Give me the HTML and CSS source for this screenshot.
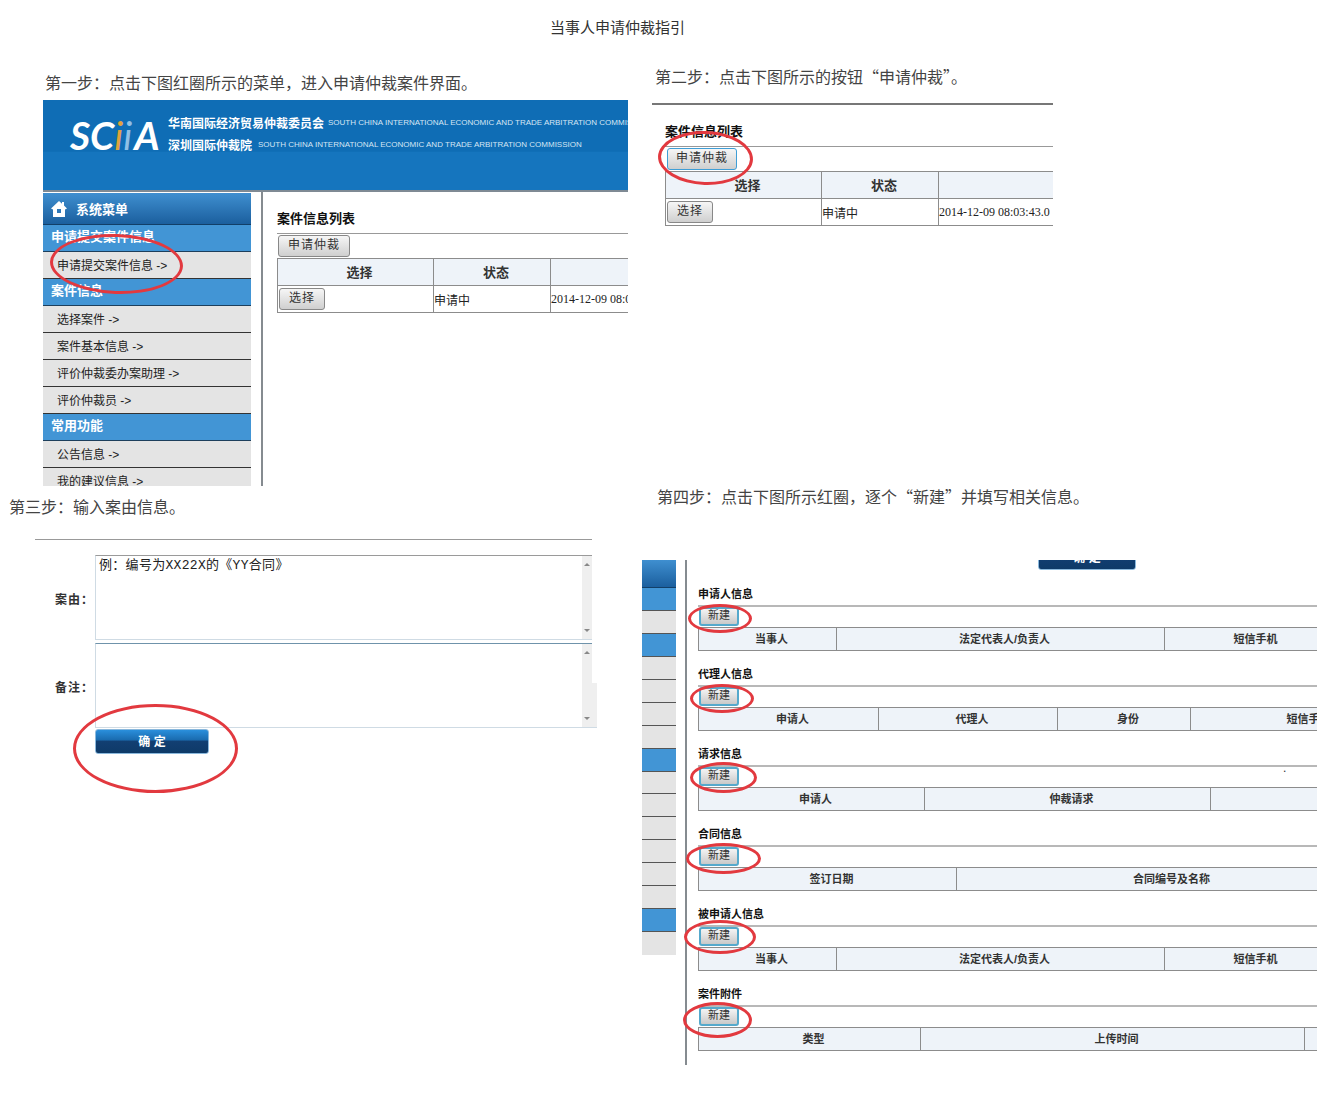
FILE: index.html
```html
<!DOCTYPE html>
<html lang="zh-CN">
<head>
    <meta charset="UTF-8">
    <title>当事人申请仲裁指引</title>
    <link rel="stylesheet" href="styles.css">
</head>
<body>
    <h1 class="page-title">当事人申请仲裁指引</h1>

    <div class="guide">
        <!-- step 1 -->
        <section class="step step-one">
            <p class="step-text">第一步：点击下图红圈所示的菜单，进入申请仲裁案件界面。</p>
            <div class="shot shot-one">
                <header class="site-head">
                    <div class="logo"><span>SC</span><span class="logo-i1">i</span><span class="logo-i2">i</span><span>A</span></div>
                    <div class="site-names">
                        <div class="site-name"><b>华南国际经济贸易仲裁委员会</b><span>SOUTH CHINA INTERNATIONAL ECONOMIC AND TRADE ARBITRATION COMMISSION</span></div>
                        <div class="site-name"><b>深圳国际仲裁院</b><span>SOUTH CHINA INTERNATIONAL ECONOMIC AND TRADE ARBITRATION COMMISSION</span></div>
                    </div>
                </header>
                <div class="app-body">
                    <nav class="side-menu">
                        <div class="menu-top">
                            <svg class="home-icon" viewBox="0 0 18 18" width="18" height="18"><path fill="#fff" d="M9 1 L1 8.5 L3 9.5 L3 17 L15 17 L15 9.5 L17 8.5 L14 5.6 L14 2 L12 2 L12 3.8 Z"/><rect x="7" y="9" width="4" height="4" fill="#2f78b8"/></svg>
                            系统菜单
                        </div>
                        <div class="menu-group">申请提交案件信息</div>
                        <div class="menu-item">申请提交案件信息 -&gt;</div>
                        <div class="menu-group">案件信息</div>
                        <div class="menu-item">选择案件 -&gt;</div>
                        <div class="menu-item">案件基本信息 -&gt;</div>
                        <div class="menu-item">评价仲裁委办案助理 -&gt;</div>
                        <div class="menu-item">评价仲裁员 -&gt;</div>
                        <div class="menu-group">常用功能</div>
                        <div class="menu-item">公告信息 -&gt;</div>
                        <div class="menu-item">我的建议信息 -&gt;</div>
                    </nav>
                    <div class="case-list case-list-one">
                        <h3 class="list-title">案件信息列表</h3>
                        <div class="list-tools"><button class="btn-grey btn-apply">申请仲裁</button></div>
                        <table class="data-table cases">
                            <tr><th>选择</th><th>状态</th><th></th></tr>
                            <tr><td><button class="btn-grey btn-pick">选择</button></td><td>申请中</td><td class="date">2014-12-09 08:03:43.0</td></tr>
                        </table>
                    </div>
                </div>
                <div class="ring ring-menu"></div>
            </div>
        </section>

        <!-- step 2 -->
        <section class="step step-two">
            <p class="step-text">第二步：点击下图所示的按钮“申请仲裁”。</p>
            <div class="shot shot-two">
                <div class="case-list">
                    <h3 class="list-title">案件信息列表</h3>
                    <div class="list-tools"><button class="btn-grey btn-apply is-focus">申请仲裁</button></div>
                    <table class="data-table cases">
                        <tr><th>选择</th><th>状态</th><th></th></tr>
                        <tr><td><button class="btn-grey btn-pick">选择</button></td><td>申请中</td><td class="date">2014-12-09 08:03:43.0</td></tr>
                    </table>
                </div>
                <div class="ring ring-apply"></div>
            </div>
        </section>

        <!-- step 3 -->
        <section class="step step-three">
            <p class="step-text">第三步：输入案由信息。</p>
            <div class="shot shot-three">
                <div class="form-row">
                    <label class="form-label">案由：</label>
                    <div class="fake-area">例：编号为XX22X的《YY合同》<div class="fake-bar"><i class="arrow-up"></i><i class="arrow-down"></i></div></div>
                </div>
                <div class="form-row">
                    <label class="form-label">备注：</label>
                    <div class="fake-area fake-area-active"><div class="fake-bar"><i class="arrow-up"></i><i class="arrow-down"></i></div><div class="bar-tail"></div></div>
                </div>
                <button class="btn-confirm">确 定</button>
                <div class="ring ring-confirm"></div>
            </div>
        </section>

        <!-- step 4 -->
        <section class="step step-four">
            <p class="step-text">第四步：点击下图所示红圈，逐个“新建”并填写相关信息。</p>
            <div class="shot shot-four">
                <div class="strip">
                    <div class="strip-top"></div>
                    <div class="strip-blue"></div><div class="strip-grey"></div>
                    <div class="strip-blue"></div><div class="strip-grey"></div><div class="strip-grey"></div><div class="strip-grey"></div><div class="strip-grey"></div>
                    <div class="strip-blue"></div><div class="strip-grey"></div><div class="strip-grey"></div><div class="strip-grey"></div><div class="strip-grey"></div><div class="strip-grey"></div><div class="strip-grey"></div>
                    <div class="strip-blue"></div><div class="strip-grey"></div>
                </div>
                <div class="forms">
                    <div class="cut-confirm"><button class="btn-confirm">确 定</button></div>

                    <div class="info-block">
                        <h4 class="info-title">申请人信息</h4>
                        <div class="info-tools"><button class="btn-new">新建</button></div>
                        <table class="data-table info party"><tr><th>当事人</th><th>法定代表人/负责人</th><th>短信手机</th></tr></table>
                    </div>
                    <div class="info-block">
                        <h4 class="info-title">代理人信息</h4>
                        <div class="info-tools"><button class="btn-new">新建</button></div>
                        <table class="data-table info agent"><tr><th>申请人</th><th>代理人</th><th>身份</th><th>短信手机</th></tr></table>
                    </div>
                    <div class="info-block">
                        <h4 class="info-title">请求信息</h4>
                        <div class="info-tools"><button class="btn-new">新建</button><span class="stray-dot">.</span></div>
                        <table class="data-table info claim"><tr><th>申请人</th><th>仲裁请求</th><th></th></tr></table>
                    </div>
                    <div class="info-block">
                        <h4 class="info-title">合同信息</h4>
                        <div class="info-tools"><button class="btn-new">新建</button></div>
                        <table class="data-table info contract"><tr><th>签订日期</th><th>合同编号及名称</th></tr></table>
                    </div>
                    <div class="info-block">
                        <h4 class="info-title">被申请人信息</h4>
                        <div class="info-tools"><button class="btn-new">新建</button></div>
                        <table class="data-table info party"><tr><th>当事人</th><th>法定代表人/负责人</th><th>短信手机</th></tr></table>
                    </div>
                    <div class="info-block">
                        <h4 class="info-title">案件附件</h4>
                        <div class="info-tools"><button class="btn-new">新建</button></div>
                        <table class="data-table info attach"><tr><th>类型</th><th>上传时间</th><th></th></tr></table>
                    </div>
                </div>
                <div class="ring ring-new1"></div>
                <div class="ring ring-new2"></div>
                <div class="ring ring-new3"></div>
                <div class="ring ring-new4"></div>
                <div class="ring ring-new5"></div>
                <div class="ring ring-new6"></div>
            </div>
        </section>
    </div>
</body>
</html>
```

FILE: styles.css
```css
* {
    box-sizing: border-box;
}

body {
    margin: 0;
    height: 1102px;
    background-color: #ffffff;
    color: #333333;
    font-family: "Liberation Sans", "Noto Sans CJK SC", sans-serif;
    overflow: hidden;
}

.page-title {
    margin: 0;
    height: 60px;
    padding-right: 102px;
    font-size: 15px;
    font-weight: normal;
    line-height: 56px;
    text-align: center;
}

.guide {
    display: grid;
    grid-template-columns: 642px 695px;
    grid-template-rows: 426px auto;
}

.step-text {
    margin: 0;
    height: 22px;
    font-family: "Noto Sans CJK SC", sans-serif;
    font-size: 16px;
    line-height: 21px;
    color: #444444;
    white-space: nowrap;
}

.shot {
    position: relative;
}

/* red hand drawn rings */
.ring {
    position: absolute;
    border: 3px solid #e2393f;
    border-radius: 50%;
    pointer-events: none;
}

/* step 1 */
.step-one {
    padding: 12px 0 0 43px;
}

.step-one .step-text {
    margin-left: 2px;
    margin-bottom: 6px;
}

.shot-one {
    width: 585px;
    height: 386px;
    overflow: hidden;
}

.site-head {
    display: flex;
    height: 92px;
    padding: 13px 0 0 27px;
    background: linear-gradient(#0f6db5 0, #0f6db5 57%, #1575be 58%, #1575be 100%);
    border-bottom: 2px solid #7f8a94;
    color: #ffffff;
    white-space: nowrap;
}

.logo {
    flex-shrink: 0;
    width: 98px;
    font-family: Lato, "Liberation Sans", sans-serif;
    font-size: 39px;
    font-style: italic;
    font-weight: bold;
    line-height: 44px;
}

.logo-i1 {
    color: #e0a33c;
    font-weight: normal;
}

.logo-i2 {
    color: #8fc0e6;
    font-weight: normal;
    margin-right: 2px;
}

.site-names {
    display: flex;
    flex-direction: column;
    gap: 4px;
}

.site-name {
    display: flex;
    align-items: center;
    height: 18px;
}

.site-name b {
    font-size: 12px;
    font-family: "Noto Sans CJK SC", sans-serif;
}

.site-name span {
    margin-left: 4px;
    font-size: 8px;
    color: #d5e6f4;
}

.site-name:last-child span {
    margin-left: 6px;
}

.app-body {
    display: flex;
    height: 294px;
}

.side-menu {
    width: 208px;
    padding-top: 1px;
    font-size: 12px;
    flex-shrink: 0;
}

.menu-top {
    display: flex;
    align-items: center;
    gap: 8px;
    height: 32px;
    padding-left: 7px;
    background: linear-gradient(#3f8fd0, #1b5f9e);
    border-bottom: 1px solid #123f68;
    color: #ffffff;
    font-size: 13px;
    font-weight: bold;
}

.menu-group {
    height: 27px;
    padding-left: 8px;
    background-color: #4295d5;
    border-bottom: 1px solid #1d3f5c;
    color: #ffffff;
    font-size: 13px;
    font-weight: bold;
    line-height: 24px;
}

.menu-item {
    height: 27px;
    padding-left: 14px;
    background-color: #e4e4e4;
    border-bottom: 1px solid #333333;
    color: #222222;
    line-height: 28px;
}

.case-list-one {
    flex: 1;
    min-width: 0;
    margin-left: 10px;
    border-left: 2px solid #858b90;
    padding-left: 14px;
}

.case-list {
    padding-top: 18px;
    overflow: hidden;
}

.list-title {
    margin: 0 0 5px;
    height: 18px;
    font-size: 13px;
    line-height: 18px;
    color: #111111;
}

.list-tools {
    height: 25px;
    padding: 1px 0 0 1px;
    border-top: 1px solid #999999;
}

.btn-grey {
    display: block;
    padding: 0 0 2px;
    border: 1px solid #888888;
    border-radius: 3px;
    background: linear-gradient(#f6f6f6, #cfcfcf);
    color: #333333;
    font-family: inherit;
    font-size: 12px;
    line-height: 14px;
    letter-spacing: 1px;
}

.btn-apply {
    width: 72px;
    height: 22px;
}

.btn-pick {
    width: 46px;
    height: 22px;
    margin-left: 1px;
}

.is-focus {
    width: 70px;
    border-color: #3f9ed6;
    margin-left: 1px;
}

.data-table {
    table-layout: fixed;
    border-collapse: collapse;
    white-space: nowrap;
}

.data-table th {
    height: 27px;
    padding: 0;
    background-color: #eef3f9;
    border: 1px solid #8c8c8c;
    font-size: 13px;
    color: #333333;
}

.data-table td {
    height: 27px;
    padding: 0;
    overflow: hidden;
    border: 1px solid #8c8c8c;
    font-size: 12px;
    color: #222222;
}

.cases {
    width: 396px;
    border-right: 0;
}

.cases th {
    padding: 0 0 2px 8px;
}

.cases th:nth-child(1) {
    width: 156px;
}

.cases th:nth-child(2) {
    width: 117px;
}

.date {
    font-family: "Liberation Serif", serif;
}

.ring-menu {
    left: 7px;
    top: 134px;
    width: 133px;
    height: 60px;
    transform: rotate(2deg);
}

/* step 2 */
.step-two {
    padding-top: 6px;
}

.step-two .step-text {
    margin: 0 0 15px 13px;
}

.shot-two {
    width: 401px;
    margin-left: 10px;
    border-top: 2px solid #777777;
}

.shot-two .case-list {
    padding: 18px 0 0 13px;
}

.ring-apply {
    left: 6px;
    top: 26px;
    width: 95px;
    height: 54px;
    transform: rotate(2deg);
}

/* step 3 */
.step-three {
    padding-top: 10px;
}

.step-three .step-text {
    margin: 0 0 21px 9px;
}

.shot-three {
    width: 557px;
    margin-left: 35px;
    padding-top: 15px;
    border-top: 1px solid #999999;
}

.form-row {
    display: flex;
    align-items: center;
    gap: 1px;
    height: 85px;
    margin-bottom: 3px;
}

.form-label {
    width: 59px;
    padding-top: 1px;
    font-size: 12px;
    font-weight: bold;
    letter-spacing: 1px;
    text-align: right;
}

.fake-area {
    position: relative;
    flex: 1;
    height: 85px;
    padding-left: 3px;
    border: 1px solid #cfdbe4;
    border-top-color: #9a9a9a;
    border-right: 0;
    font-family: "Liberation Mono", "Noto Sans CJK SC", monospace;
    font-size: 13px;
    letter-spacing: 0.3px;
    line-height: 20px;
    color: #222222;
}

.fake-area-active {
    border-top-color: #6f93ab;
}

.fake-bar {
    position: absolute;
    top: 0;
    right: 0;
    bottom: 0;
    width: 10px;
    background-color: #efefef;
}

.arrow-up,
.arrow-down {
    position: absolute;
    left: 2px;
    border-left: 3px solid transparent;
    border-right: 3px solid transparent;
}

.arrow-up {
    top: 7px;
    border-bottom: 3px solid #888888;
}

.arrow-down {
    bottom: 7px;
    border-top: 3px solid #888888;
}

.bar-tail {
    position: absolute;
    left: 100%;
    bottom: -1px;
    width: 5px;
    height: 45px;
    background-color: #efefef;
    border-bottom: 1px solid #cfdbe4;
}

.btn-confirm {
    display: block;
    width: 114px;
    height: 25px;
    margin: -2px 0 0 60px;
    padding: 0 0 2px;
    border: 1px solid #8ab8dc;
    border-radius: 3px;
    background: linear-gradient(#2a8fdc 0, #1a6cb0 42%, #123f72 50%, #0e3a68 100%);
    color: #ffffff;
    font-family: inherit;
    font-size: 12px;
    font-weight: bold;
}

.ring-confirm {
    left: 38px;
    top: 164px;
    width: 165px;
    height: 89px;
}

/* step 4 */
.step-four .step-text {
    margin: 0 0 52px 15px;
}

.shot-four {
    display: flex;
    align-items: flex-start;
    width: 675px;
    height: 505px;
    overflow: hidden;
}

.strip {
    width: 34px;
    flex-shrink: 0;
}

.strip-top {
    height: 28px;
    background: linear-gradient(#3f8fd0, #1b5f9e);
    border-bottom: 1px solid #123f68;
}

.strip-blue,
.strip-grey {
    height: 22.94px;
    border-bottom: 1px solid #555555;
}

.strip-blue {
    background-color: #4295d5;
}

.strip-grey {
    background-color: #e4e4e4;
}

.strip > :last-child {
    border-bottom: 0;
}

.forms {
    flex: 1;
    min-width: 0;
    height: 505px;
    margin-left: 9px;
    padding-left: 11px;
    border-left: 2px solid #858b90;
    overflow: hidden;
}

.cut-confirm {
    height: 10px;
    margin-bottom: 16px;
    overflow: hidden;
}

.cut-confirm .btn-confirm {
    width: 98px;
    margin: -15px 0 0 340px;
}

.info-block {
    height: 64px;
    margin-bottom: 16px;
}

.info-title {
    margin: 0 0 3px;
    height: 16px;
    font-size: 11px;
    line-height: 16px;
    color: #111111;
}

.info-tools {
    position: relative;
    height: 22px;
    border-top: 2px solid #b8b8b8;
    padding-left: 1px;
}

.stray-dot {
    position: absolute;
    left: 585px;
    top: -6px;
    font-size: 12px;
    color: #333333;
}

.btn-new {
    display: block;
    width: 40px;
    height: 19px;
    padding: 0 0 3px;
    border: 2px solid #55a9cc;
    border-radius: 3px;
    background: linear-gradient(#f4f4f4, #c9c9c9);
    color: #333333;
    font-family: inherit;
    font-size: 11px;
    line-height: 10px;
}

.info {
    border-left: 1px solid #8c8c8c;
}

.info th {
    height: 23px;
    padding: 0 0 2px 8px;
    font-size: 11px;
}

.party { width: 640px; }
.party th:nth-child(1) { width: 138px; }
.party th:nth-child(2) { width: 328px; }
.party th:nth-child(3) { width: 174px; }

.agent { width: 720px; }
.agent th:nth-child(1) { width: 180px; }
.agent th:nth-child(2) { width: 179px; }
.agent th:nth-child(3) { width: 133px; }
.agent th:nth-child(4) { width: 228px; }

.claim { width: 660px; }
.claim th:nth-child(1) { width: 226px; }
.claim th:nth-child(2) { width: 286px; }
.claim th:nth-child(3) { width: 148px; }

.contract { width: 680px; }
.contract th:nth-child(1) { width: 258px; }
.contract th:nth-child(2) { width: 422px; }

.attach { width: 756px; }
.attach th:nth-child(1) { width: 222px; }
.attach th:nth-child(2) { width: 384px; }
.attach th:nth-child(3) { width: 150px; }

/* rings of step 4, one per 新建 button */
.ring-new1 { left: 46px; top: 44px; width: 64px; height: 29px; }
.ring-new2 { left: 48px; top: 124px; width: 64px; height: 29px; }
.ring-new3 { left: 48px; top: 202px; width: 67px; height: 31px; }
.ring-new4 { left: 44px; top: 283px; width: 75px; height: 31px; }
.ring-new5 { left: 42px; top: 360px; width: 72px; height: 34px; }
.ring-new6 { left: 41px; top: 442px; width: 69px; height: 36px; }
```
